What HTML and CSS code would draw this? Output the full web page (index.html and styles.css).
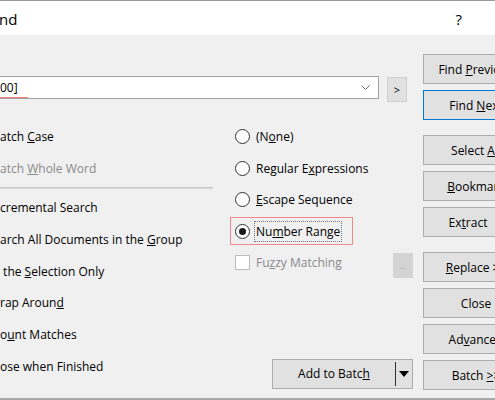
FILE: index.html
```html
<!DOCTYPE html>
<html>
<head>
<meta charset="utf-8">
<link rel="stylesheet" href="styles.css">
</head>
<body>
<div class="window">
  <div class="titlebar">
    <span class="title">nd</span>
    <span class="help">?</span>
  </div>
  <div class="main">
    <div class="content">
      <div class="search-row">
        <div class="combo">
          <span class="combo-text">00]</span>
          <svg class="chev" width="9" height="6" viewBox="0 0 9 6"><polyline points="0.5,0.5 4.5,4.5 8.5,0.5" fill="none" stroke="#6b6b6b" stroke-width="1"/></svg>
        </div>
        <div class="small-btn">&gt;</div>
      </div>
      <div class="options">
        <div class="checks">
          <div class="row">atch <u>C</u>ase</div>
          <div class="row disabled">atch <u>W</u>hole Word</div>
          <div class="sep"></div>
          <div class="row">cremental Search</div>
          <div class="row">arch All Documents in the <u>G</u>roup</div>
          <div class="row">&nbsp;the <u>S</u>election Only</div>
          <div class="row">rap Aroun<u>d</u></div>
          <div class="row">o<u>u</u>nt Matches</div>
          <div class="row">ose when Finished</div>
        </div>
        <div class="radios">
          <div class="rrow"><span class="opt"><span class="radio"></span><span class="lbl">(N<u>o</u>ne)</span></span></div>
          <div class="rrow"><span class="opt"><span class="radio"></span><span class="lbl">Regular E<u>x</u>pressions</span></span></div>
          <div class="rrow"><span class="opt"><span class="radio"></span><span class="lbl"><u>E</u>scape Sequence</span></span></div>
          <div class="rrow"><span class="opt hl"><span class="radio on"></span><span class="lbl focus">Nu<u>m</u>ber Range</span></span></div>
          <div class="rrow fuzzy"><span class="opt"><span class="check"></span><span class="lbl disabled">Fu<u>z</u>zy Matching</span></span><span class="dots-btn">...</span></div>
          <div class="split-btn">
            <span class="split-main">Add to Batc<u>h</u></span>
            <span class="split-arrow"><svg width="10" height="6" viewBox="0 0 10 6"><polygon points="0,0 10,0 5,6" fill="#000"/></svg></span>
          </div>
        </div>
      </div>
    </div>
    <div class="buttons">
      <div class="btn"><span>Find <u>P</u>revious</span></div>
      <div class="btn default"><span>Find <u>N</u>ext</span></div>
      <div class="btn group"><span>Select <u>A</u>ll</span></div>
      <div class="btn"><span><u>B</u>ookmark</span></div>
      <div class="btn extract"><span>Ex<u>t</u>ract</span></div>
      <div class="btn group"><span><u>R</u>eplace &gt;&gt;</span></div>
      <div class="btn"><span>Close</span></div>
      <div class="btn"><span>Ad<u>v</u>anced</span></div>
      <div class="btn"><span>Batch <u>&gt;</u>&gt;</span></div>
    </div>
  </div>
</div>
</body>
</html>
```
FILE: styles.css
```css
html, body {
  margin: 0;
  padding: 0;
  width: 495px;
  height: 400px;
  overflow: hidden;
  background: #f0f0f0;
}
body {
  font-family: "Open Sans", "Noto Sans", sans-serif;
  font-size: 12px;
  color: #000;
}
u { text-decoration: underline; text-underline-offset: 1px; }
.window {
  width: 495px;
  height: 400px;
  box-sizing: border-box;
  border-top: 1px solid #9a9a9a;
  border-bottom: 2px solid #a8a8a8;
  overflow: hidden;
}
.titlebar {
  height: 34px;
  background: #fff;
  display: flex;
  align-items: center;
  justify-content: space-between;
  font-size: 15px;
}
.title { margin-left: -1px; margin-top: 2px; }
.help { margin-right: 33px; margin-top: 2px; }
.main {
  display: flex;
  height: 363px;
}
.content {
  width: 423px;
  flex: none;
  padding-top: 41px;
  box-sizing: border-box;
  display: flex;
  flex-direction: column;
}
.search-row {
  display: flex;
  align-items: flex-start;
}
.combo {
  width: 379px;
  height: 23px;
  box-sizing: border-box;
  background: #fff;
  border: 1px solid #a2a2a2;
  border-left: none;
  display: flex;
  align-items: center;
  justify-content: space-between;
  padding-right: 8px;
}
.combo-text {
  position: relative;
  line-height: 18px;
}
.combo-text::after {
  content: "";
  position: absolute;
  left: 0;
  top: 18px;
  width: 28px;
  height: 1px;
  background: #ef7b7b;
}
.chev { margin-top: 1px; }
.small-btn {
  margin-left: 8px;
  margin-top: 1px;
  width: 20px;
  height: 25px;
  box-sizing: border-box;
  background: #e1e1e1;
  border: 1px solid #cfcfcf;
  display: flex;
  align-items: center;
  justify-content: center;
  font-size: 11px;
}
.options {
  display: flex;
  margin-top: 19px;
  flex: 1;
}
.checks {
  width: 213px;
  flex: none;
}
.row {
  height: 31.7px;
  line-height: 31.7px;
  white-space: nowrap;
}
.disabled { color: #8a8a8a; }
.sep {
  height: 8px;
  padding-top: 3px;
  box-sizing: border-box;
}
.sep::before {
  content: "";
  display: block;
  height: 1px;
  background: #c6c6c6;
  border-bottom: 1px solid #dcdcdc;
}
.radios {
  margin-left: 17px;
  width: 183px;
  display: flex;
  flex-direction: column;
}
.rrow {
  height: 31.5px;
  display: flex;
  align-items: center;
  white-space: nowrap;
}
.opt {
  display: inline-flex;
  align-items: center;
  height: 28px;
  box-sizing: border-box;
  border: 1px solid transparent;
  padding-left: 4px;
}
.opt.hl {
  border-color: #ef8a8a;
  width: 123px;
}
.radio {
  width: 15px;
  height: 15px;
  box-sizing: border-box;
  border: 1px solid #333;
  border-radius: 50%;
  background: #fff;
  display: flex;
  align-items: center;
  justify-content: center;
  flex: none;
}
.radio.on::after {
  content: "";
  width: 7px;
  height: 7px;
  border-radius: 50%;
  background: #1a1a1a;
}
.check {
  width: 15px;
  height: 15px;
  box-sizing: border-box;
  border: 1px solid #bdbdbd;
  background: #fff;
  flex: none;
}
.lbl {
  margin-left: 4px;
  border: 1px solid transparent;
  padding: 0 1px;
  line-height: 19px;
}
.lbl.focus { border: 1px dotted #777; }
.fuzzy { justify-content: space-between; }
.dots-btn {
  width: 20px;
  height: 25px;
  background: #d4d4d4;
  color: #a9a9a9;
  font-size: 9px;
  display: flex;
  align-items: center;
  justify-content: center;
  margin-top: 5px;
}
.split-btn {
  margin-top: auto;
  margin-bottom: 9px;
  align-self: flex-end;
  width: 141px;
  height: 30px;
  box-sizing: border-box;
  background: #e1e1e1;
  border: 1px solid #adadad;
  display: flex;
  align-items: center;
  font-size: 12px;
}
.split-main {
  flex: 1;
  text-align: center;
  border-right: 1px solid #333;
  height: 24px;
  line-height: 24px;
}
.split-arrow {
  width: 16px;
  display: flex;
  justify-content: center;
}
.buttons {
  display: flex;
  flex-direction: column;
  gap: 6px;
  padding-top: 19px;
  flex: none;
}
.btn {
  width: 106px;
  height: 30px;
  box-sizing: border-box;
  background: #e1e1e1;
  border: 1px solid #adadad;
  display: flex;
  align-items: center;
  justify-content: center;
  font-size: 12px;
  white-space: nowrap;
}
.btn.default { border-color: #0078d7; }
.btn.group { margin-top: 9px; }
.btn.extract { padding-right: 16px; }
```
